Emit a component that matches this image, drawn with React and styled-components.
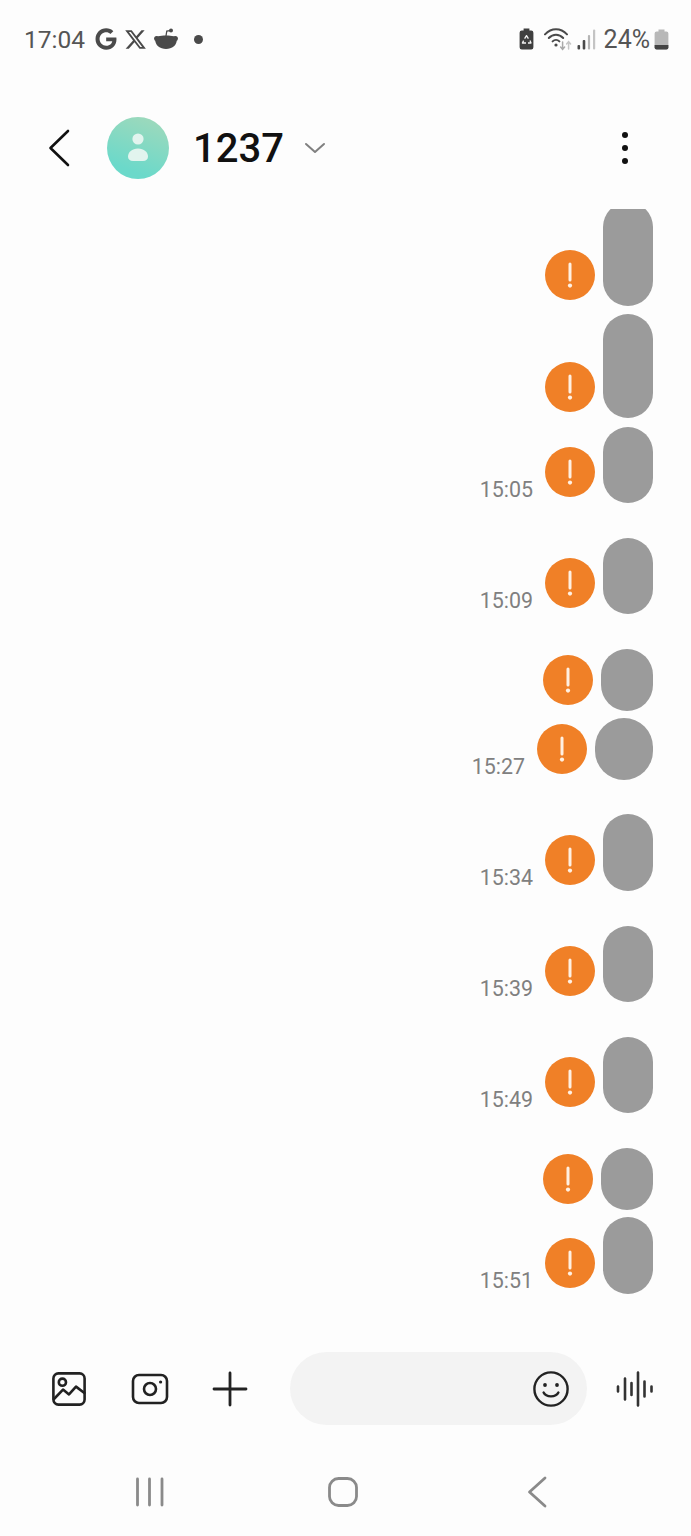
import React from 'react';
import styled, { createGlobalStyle } from 'styled-components';
import { FaGoogle } from 'react-icons/fa';
import { FaXTwitter } from 'react-icons/fa6';

const messages = [
  { id: 1, height: 104, gap: 0 },
  { id: 2, height: 104, gap: 8 },
  { id: 3, height: 76, gap: 9, time: '15:05' },
  { id: 4, height: 76, gap: 35, time: '15:09' },
  { id: 5, height: 62, width: 52, gap: 35 },
  { id: 6, height: 62, width: 58, gap: 7, time: '15:27' },
  { id: 7, height: 77, gap: 34, time: '15:34' },
  { id: 8, height: 76, gap: 35, time: '15:39' },
  { id: 9, height: 76, gap: 35, time: '15:49' },
  { id: 10, height: 62, width: 52, gap: 35 },
  { id: 11, height: 77, gap: 7, time: '15:51' },
];

const RedditIcon = () => (
  <svg width="24" height="22" viewBox="0 0 24 22" fill="#4a4a4a">
    <circle cx="17" cy="2.6" r="2" />
    <path d="M12 8 L12.8 3 L16 2.6" fill="none" stroke="#4a4a4a" strokeWidth="1.3" />
    <circle cx="2.6" cy="10.4" r="2.5" />
    <circle cx="21.4" cy="10.4" r="2.5" />
    <path d="M1.2 11.5 C1.2 8.5 6 7.6 12 7.6 C18 7.6 22.8 8.5 22.8 11.5 C22.8 17.5 18 21 12 21 C6 21 1.2 17.5 1.2 11.5 Z" />
  </svg>
);

const RecycleBatteryIcon = () => (
  <svg width="15" height="22" viewBox="0 0 15 22">
    <path d="M4.6 0.5 H10.4 V2.6 H12.2 Q14.4 2.6 14.4 4.8 V19.3 Q14.4 21.5 12.2 21.5 H2.8 Q0.6 21.5 0.6 19.3 V4.8 Q0.6 2.6 2.8 2.6 H4.6 Z" fill="#3f3f3f" />
    <path d="M5.6 10.6 L7.5 7.6 L9.4 10.6 M11 12.6 L12 15 H9 M7 15 H3.4 L4.6 12.6" fill="none" stroke="#f4f4f4" strokeWidth="1.3" strokeLinejoin="round" />
  </svg>
);

const WifiIcon = () => (
  <svg width="29" height="24" viewBox="0 0 29 24" fill="none" strokeLinecap="round">
    <path d="M1 7.4 C7.5 0.6 16.5 0.6 23 7.4" stroke="#4a4a4a" strokeWidth="2" />
    <path d="M4.8 11 C9 6.6 15 6.6 19.2 11" stroke="#4a4a4a" strokeWidth="2" />
    <path d="M8.6 14.4 C10.6 12.4 13.4 12.4 15.4 14.4" stroke="#4a4a4a" strokeWidth="2" />
    <circle cx="12" cy="18" r="1.6" fill="#4a4a4a" />
    <path d="M18.6 15 V22 M16.6 20 L18.6 22.4 L20.6 20" stroke="#a9a9a9" strokeWidth="1.5" />
    <path d="M24.6 22 V15 M22.6 17 L24.6 14.6 L26.6 17" stroke="#c6c6c6" strokeWidth="1.5" />
  </svg>
);

const SignalIcon = () => (
  <svg width="19" height="21" viewBox="0 0 19 21">
    <rect x="0.5" y="16" width="2.6" height="4.5" rx="1" fill="#4a4a4a" />
    <rect x="5.7" y="11" width="2.6" height="9.5" rx="1" fill="#4a4a4a" />
    <rect x="10.9" y="6" width="2.2" height="14.5" rx="1" fill="#b5b5b5" />
    <rect x="16" y="0.5" width="2.2" height="20" rx="1" fill="#c4c4c4" />
  </svg>
);

const BatteryIcon = () => (
  <svg width="15" height="21" viewBox="0 0 15 21">
    <path d="M4.5 0.5 H10.5 V2.4 H12.4 Q14.4 2.4 14.4 4.4 V18.6 Q14.4 20.6 12.4 20.6 H2.6 Q0.6 20.6 0.6 18.6 V4.4 Q0.6 2.4 2.6 2.4 H4.5 Z" fill="#b8b8b8" />
    <path d="M0.6 16 H14.4 V18.6 Q14.4 20.6 12.4 20.6 H2.6 Q0.6 20.6 0.6 18.6 Z" fill="#444" />
  </svg>
);

const BackIcon = () => (
  <svg width="24" height="38" viewBox="0 0 24 38" fill="none">
    <path d="M21 2 L3.5 19 L21 36" stroke="#111" strokeWidth="2.6" strokeLinecap="round" strokeLinejoin="round" />
  </svg>
);

const PersonIcon = () => (
  <svg width="22" height="30" viewBox="0 0 22 30" fill="#e2f4ee">
    <circle cx="11" cy="6" r="5.6" />
    <path d="M11 15.4 C17 15.4 21 19 21 23.6 C21 26.6 19 28 16 28 H6 C3 28 1 26.6 1 23.6 C1 19 5 15.4 11 15.4 Z" />
  </svg>
);

const ChevronIcon = () => (
  <svg width="22" height="12" viewBox="0 0 22 12" fill="none">
    <path d="M2 2 L11 10 L20 2" stroke="#808080" strokeWidth="2" strokeLinecap="round" strokeLinejoin="round" />
  </svg>
);

const AlertIcon = () => (
  <svg width="50" height="50" viewBox="0 0 50 50">
    <circle cx="25" cy="25" r="25" fill="#f08027" />
    <path d="M25 14 V30" stroke="#fff0e2" strokeWidth="3" strokeLinecap="round" />
    <circle cx="25" cy="35.6" r="2.1" fill="#fff0e2" />
  </svg>
);

const GalleryIcon = () => (
  <svg width="36" height="36" viewBox="0 0 36 36" fill="none" stroke="#222" strokeWidth="2.6" strokeLinejoin="round" strokeLinecap="round">
    <rect x="2.4" y="2.4" width="31.2" height="31.2" rx="5" />
    <circle cx="11.4" cy="11.2" r="3.6" />
    <path d="M3 28 L12 18.6 L18 23.4 L25 15.6 L33.4 22" />
  </svg>
);

const CameraIcon = () => (
  <svg width="38" height="32" viewBox="0 0 38 32" fill="none" stroke="#222" strokeWidth="2.6">
    <rect x="2" y="2" width="34" height="28" rx="6" />
    <circle cx="19" cy="16" r="6" />
    <circle cx="29.6" cy="9" r="1.6" fill="#222" stroke="none" />
  </svg>
);

const PlusIcon = () => (
  <svg width="36" height="36" viewBox="0 0 36 36" fill="none" stroke="#222" strokeWidth="2.8" strokeLinecap="round">
    <path d="M18 2 V34 M2 18 H34" />
  </svg>
);

const SmileIcon = () => (
  <svg width="36" height="36" viewBox="0 0 36 36" fill="none" stroke="#222" strokeWidth="2.4" strokeLinecap="round">
    <circle cx="18" cy="18" r="16.6" />
    <circle cx="12" cy="14" r="1.9" fill="#222" stroke="none" />
    <circle cx="24" cy="14" r="1.9" fill="#222" stroke="none" />
    <path d="M10.6 21.6 C13 26.6 23 26.6 25.4 21.6" />
  </svg>
);

const VoiceIcon = () => (
  <svg width="38" height="36" viewBox="0 0 38 36" fill="none" stroke="#333" strokeWidth="2.6" strokeLinecap="round">
    <path d="M2 15.5 V20.5 M9 7.5 V28.5 M15.5 12 V24 M22 1.5 V34.5 M28.5 10.5 V25.5 M35.5 15.5 V20.5" />
  </svg>
);

const RecentsIcon = () => (
  <svg width="30" height="30" viewBox="0 0 30 30" fill="none" stroke="#8a8a8a" strokeWidth="2.8" strokeLinecap="round">
    <path d="M2.5 2 V28 M14.5 2 V28 M27 2 V28" />
  </svg>
);

const HomeIcon = () => (
  <svg width="30" height="30" viewBox="0 0 30 30" fill="none" stroke="#8a8a8a" strokeWidth="2.8">
    <rect x="1.5" y="1.5" width="27" height="27" rx="9" />
  </svg>
);

const NavBackIcon = () => (
  <svg width="20" height="32" viewBox="0 0 20 32" fill="none" stroke="#8a8a8a" strokeWidth="2.8" strokeLinecap="round" strokeLinejoin="round">
    <path d="M18 2 L2.5 16 L18 30" />
  </svg>
);

const App = () => (
  <Page>
    <GlobalStyle />
    <StatusBar>
      <StatusGroup>
        <Clock>17:04</Clock>
        <FaGoogle size={22} color="#4a4a4a" />
        <FaXTwitter size={23} color="#4a4a4a" />
        <RedditIcon />
        <Dot />
      </StatusGroup>
      <StatusGroup>
        <RecycleBatteryIcon />
        <WifiSlot>
          <WifiIcon />
        </WifiSlot>
        <SignalIcon />
        <Percent>24%</Percent>
        <BatteryIcon />
      </StatusGroup>
    </StatusBar>

    <Header>
      <BackButton>
        <BackIcon />
      </BackButton>
      <Avatar>
        <PersonIcon />
      </Avatar>
      <Name>1237</Name>
      <ChevronIcon />
      <MoreButton>
        <MoreDot />
        <MoreDot />
        <MoreDot />
      </MoreButton>
    </Header>

    <MessageList>
      {messages.map((message) => (
        <Row key={message.id} $gap={message.gap}>
          {message.time && <Time>{message.time}</Time>}
          <AlertWrap>
            <AlertIcon />
          </AlertWrap>
          <Bubble $height={message.height} $width={message.width} />
        </Row>
      ))}
    </MessageList>

    <Composer>
      <ToolButton $width={81}>
        <GalleryIcon />
      </ToolButton>
      <ToolButton $width={81}>
        <CameraIcon />
      </ToolButton>
      <ToolButton $width={80}>
        <PlusIcon />
      </ToolButton>
      <InputPill>
        <SmileIcon />
      </InputPill>
      <VoiceButton>
        <VoiceIcon />
      </VoiceButton>
    </Composer>

    <NavBar>
      <RecentsIcon />
      <HomeSlot>
        <HomeIcon />
      </HomeSlot>
      <NavBackIcon />
    </NavBar>
  </Page>
);

export default App;

const GlobalStyle = createGlobalStyle`
  html, body {
    margin: 0;
    padding: 0;
    background: #fdfdfd;
  }

  * {
    box-sizing: border-box;
  }
`;

const Page = styled.div`
  width: 691px;
  height: 1536px;
  display: flex;
  flex-direction: column;
  overflow: hidden;
  background: #fdfdfd;
  font-family: Roboto, "Liberation Sans", sans-serif;
`;

const StatusBar = styled.div`
  height: 78px;
  flex: none;
  display: flex;
  align-items: center;
  justify-content: space-between;
  padding: 0 22px 0 24px;
`;

const StatusGroup = styled.div`
  display: flex;
  align-items: center;
  gap: 7px;
`;

const WifiSlot = styled.div`
  display: flex;
  margin: 0 -3px 0 3px;
`;

const Clock = styled.span`
  font-size: 24.5px;
  color: #555;
  margin-right: 3px;
`;

const Percent = styled.span`
  font-size: 25px;
  color: #555;
  margin: 0 -3px 0 1px;
`;

const Dot = styled.span`
  width: 9px;
  height: 9px;
  margin-left: 9px;
  border-radius: 50%;
  background: #4a4a4a;
`;

const Header = styled.div`
  height: 131px;
  flex: none;
  display: flex;
  align-items: center;
  padding: 9px 0 0 47px;
`;

const BackButton = styled.div`
  width: 60px;
  display: flex;
`;

const Avatar = styled.div`
  width: 62px;
  height: 62px;
  display: flex;
  align-items: center;
  justify-content: center;
  border-radius: 50%;
  background: linear-gradient(20deg, #6bd9ca 20%, #a3d9ba 100%);
`;

const Name = styled.div`
  margin: 0 20px 0 24px;
  font-size: 40px;
  font-weight: 500;
  color: #111;
`;

const MoreButton = styled.div`
  margin-left: auto;
  margin-right: 63px;
  display: flex;
  flex-direction: column;
  gap: 7px;
`;

const MoreDot = styled.span`
  width: 6px;
  height: 6px;
  border-radius: 50%;
  background: #111;
`;

const MessageList = styled.div`
  flex: 1;
  min-height: 0;
  display: flex;
  flex-direction: column;
  justify-content: flex-end;
  overflow: hidden;
  padding: 0 38px 58px 0;
`;

const Row = styled.div`
  flex: none;
  display: flex;
  align-items: flex-end;
  justify-content: flex-end;
  margin-top: ${({ $gap }) => $gap}px;
`;

const Time = styled.span`
  margin: 0 12px 1px 0;
  font-size: 21.4px;
  line-height: 24px;
  color: #808080;
`;

const AlertWrap = styled.div`
  display: flex;
  margin: 0 8px 6px 0;
`;

const Bubble = styled.div`
  width: ${({ $width }) => $width || 50}px;
  height: ${({ $height }) => $height}px;
  border-radius: 999px;
  background: #9b9b9b;
`;

const Composer = styled.div`
  height: 73px;
  flex: none;
  display: flex;
  align-items: center;
  padding-left: 28px;
`;

const ToolButton = styled.div`
  width: ${({ $width }) => $width}px;
  display: flex;
  justify-content: center;
`;

const InputPill = styled.div`
  width: 297px;
  height: 73px;
  margin-left: 20px;
  display: flex;
  align-items: center;
  justify-content: flex-end;
  padding-right: 18px;
  border-radius: 37px;
  background: #f3f3f3;
`;

const VoiceButton = styled.div`
  margin-left: 29px;
  display: flex;
`;

const NavBar = styled.div`
  height: 111px;
  flex: none;
  display: flex;
  align-items: center;
  justify-content: space-between;
  padding: 23px 144px 0 135px;
`;

const HomeSlot = styled.div`
  display: flex;
  margin-right: 6px;
`;
